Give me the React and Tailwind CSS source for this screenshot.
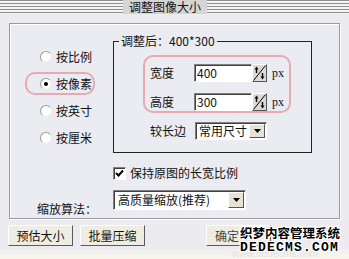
function Radio({ checked }) {
  return (
    <span className="relative w-[12px] h-[12px] rounded-full bg-white border border-t-[#9a9a9a] border-l-[#9a9a9a] border-r-[#e8e8e8] border-b-[#e8e8e8] shrink-0 flex items-center justify-center">
      {checked ? <span className="w-[4px] h-[4px] rounded-full bg-black" /> : null}
    </span>
  );
}

function Spinner() {
  return (
    <span className="w-[15px] h-[18px] shrink-0 bg-[#dcdad2] border border-t-white border-l-white border-r-[#555] border-b-[#555] flex">
      <svg width="13" height="16" viewBox="0 0 13 16">
        <line x1="0.5" y1="15.5" x2="12.5" y2="0.5" stroke="#000" strokeWidth="1" />
        <path d="M3.5 1.5 L1.5 4.5 L5.5 4.5 Z" fill="#000" />
        <line x1="3.5" y1="4" x2="3.5" y2="8" stroke="#000" strokeWidth="1.4" />
        <path d="M9.5 14.5 L7.5 11.5 L11.5 11.5 Z" fill="#000" />
        <line x1="9.5" y1="8" x2="9.5" y2="12" stroke="#000" strokeWidth="1.4" />
      </svg>
    </span>
  );
}

function Arrow() {
  return (
    <span className="w-[16px] h-full shrink-0 bg-[#e6e3d6] border border-t-white border-l-white border-r-[#555] border-b-[#555] flex items-center justify-center">
      <svg width="7" height="4" viewBox="0 0 7 4">
        <path d="M0 0 L7 0 L3.5 4 Z" fill="#000" />
      </svg>
    </span>
  );
}

export default function App() {
  return (
    <div className="relative w-[349px] h-[259px] overflow-hidden bg-[#ececf0] text-[12px] leading-[14px] text-[#111] font-['Noto_Sans_CJK_SC','Liberation_Sans',sans-serif] flex flex-col">
      {/* title bar */}
      <div className="h-[14px] shrink-0 flex bg-[repeating-linear-gradient(to_bottom,#8e8e8e_0px,#8e8e8e_1px,#f4f4f4_1px,#f4f4f4_3px)]">
        <div className="ml-[123px] w-[84px] h-[14px] bg-[#d5d5d5] text-[12px] leading-[14px] text-center text-[#111]">
          调整图像大小
        </div>
      </div>

      {/* main panel */}
      <div className="ml-[9px] mt-[9px] w-[331px] h-[196px] shrink-0 border border-[#9a9aa2] shadow-[inset_1px_1px_0_#fff,1px_1px_0_#fff] bg-[#ebebf2] flex flex-col">
        <div className="flex">
          {/* radios */}
          <div className="w-[103px] shrink-0 pt-[21px] flex flex-col gap-[4px]">
            <div className="ml-[15px] w-[70px] h-[23px] flex items-center pl-[15px] gap-[4px]">
              <Radio />
              <span>按比例</span>
            </div>
            <div className="ml-[15px] w-[70px] h-[23px] flex items-center pl-[13px] gap-[4px] border-2 border-[#e9a9b0] rounded-[10px]">
              <Radio checked />
              <span>按像素</span>
            </div>
            <div className="ml-[15px] w-[70px] h-[23px] flex items-center pl-[15px] gap-[4px]">
              <Radio />
              <span>按英寸</span>
            </div>
            <div className="ml-[15px] w-[70px] h-[23px] flex items-center pl-[15px] gap-[4px]">
              <Radio />
              <span>按厘米</span>
            </div>
          </div>

          {/* group box */}
          <fieldset className="mt-[9px] w-[199px] h-[120px] shrink-0 border border-[#222]">
            <legend className="ml-[5px] px-[2px] leading-[16px]">调整后：400*300</legend>
            <div className="ml-[29px] mt-[6px] w-[148px] h-[58px] border-2 border-[#e9a9b0] rounded-[10px] flex flex-col pt-[7px] gap-[11px]">
              <div className="flex items-center h-[18px]">
                <span className="pl-[5px] w-[49px] shrink-0">宽度</span>
                <span className="w-[58px] h-[18px] shrink-0 bg-white border border-t-[#808080] border-l-[#808080] border-r-white border-b-white shadow-[inset_1px_1px_0_#404040] pl-[2px] leading-[16px]">400</span>
                <Spinner />
                <span className="ml-[5px] text-[12px] leading-[14px] font-['Liberation_Serif',serif]">px</span>
              </div>
              <div className="flex items-center h-[18px]">
                <span className="pl-[5px] w-[49px] shrink-0">高度</span>
                <span className="w-[58px] h-[18px] shrink-0 bg-white border border-t-[#808080] border-l-[#808080] border-r-white border-b-white shadow-[inset_1px_1px_0_#404040] pl-[2px] leading-[16px]">300</span>
                <Spinner />
                <span className="ml-[5px] text-[12px] leading-[14px] font-['Liberation_Serif',serif]">px</span>
              </div>
            </div>
            <div className="mt-[9px] ml-[36px] flex items-center h-[18px]">
              <span className="w-[45px] shrink-0">较长边</span>
              <span className="w-[72px] h-[18px] shrink-0 bg-white border border-t-[#808080] border-l-[#808080] border-r-white border-b-white shadow-[inset_1px_1px_0_#404040] flex items-stretch p-[1px]">
                <span className="flex-1 pl-[2px] leading-[14px]">常用尺寸</span>
                <Arrow />
              </span>
            </div>
          </fieldset>
        </div>

        {/* keep ratio */}
        <div className="mt-[13px] pl-[103px] flex items-center h-[14px]">
          <span className="w-[13px] h-[13px] shrink-0 bg-white border border-t-[#808080] border-l-[#808080] border-r-white border-b-white shadow-[inset_1px_1px_0_#404040] flex items-center justify-center">
            <svg width="9" height="9" viewBox="0 0 9 9">
              <path d="M1 4 L3.5 6.5 L8 1.5" stroke="#000" strokeWidth="2" fill="none" />
            </svg>
          </span>
          <span className="ml-[4px]">保持原图的长宽比例</span>
        </div>

        {/* algorithm */}
        <div className="mt-[10px] flex">
          <span className="w-[103px] shrink-0 pl-[27px] pt-[12px]">缩放算法：</span>
          <span className="w-[133px] h-[20px] shrink-0 bg-white border border-t-[#808080] border-l-[#808080] border-r-white border-b-white shadow-[inset_1px_1px_0_#404040] flex items-stretch p-[1px]">
            <span className="flex-1 pl-[3px] leading-[16px]">高质量缩放(推荐)</span>
            <Arrow />
          </span>
        </div>
      </div>

      {/* buttons */}
      <div className="mt-[6px] ml-[8px] flex shrink-0">
        <button className="w-[65px] h-[21px] bg-[#efede2] border border-t-white border-l-white border-r-[#5a5a5a] border-b-[#5a5a5a] text-[12px] leading-[14px]">预估大小</button>
        <button className="ml-[7px] w-[65px] h-[21px] bg-[#efede2] border border-t-white border-l-white border-r-[#5a5a5a] border-b-[#5a5a5a] text-[12px] leading-[14px]">批量压缩</button>
        <button className="ml-[61px] w-[65px] h-[21px] bg-[#efede2] border border-t-white border-l-white border-r-[#5a5a5a] border-b-[#5a5a5a] text-[12px] leading-[14px] text-left pl-[8px] text-[#444]">确定</button>
      </div>
      <div className="flex-1 mt-[3px] bg-[linear-gradient(to_bottom,#efeff0,#f8f7ec)]" />

      {/* watermark overlay */}
      <div className="absolute left-[232px] top-[249px] text-[10px] leading-[10px] text-[#e2e2e2] font-['Liberation_Sans',sans-serif]">www.dedecms.com</div>
      <div className="absolute left-[240px] top-[225px] flex flex-col items-start">
        <span className="text-[12.5px] leading-[15px] font-bold text-black [text-shadow:1px_0_#fff,-1px_0_#fff,0_1px_#fff,0_-1px_#fff,1px_1px_#fff,-1px_-1px_#fff,1px_-1px_#fff,-1px_1px_#fff]">织梦内容管理系统</span>
        <span className="mt-[1px] text-[13px] leading-[14px] font-bold tracking-[1.2px] text-black font-['Liberation_Mono',monospace] [text-shadow:1px_0_#fff,-1px_0_#fff,0_1px_#fff,0_-1px_#fff,1px_1px_#fff,-1px_-1px_#fff,1px_-1px_#fff,-1px_1px_#fff]">DEDECMS.COM</span>
      </div>
    </div>
  );
}
